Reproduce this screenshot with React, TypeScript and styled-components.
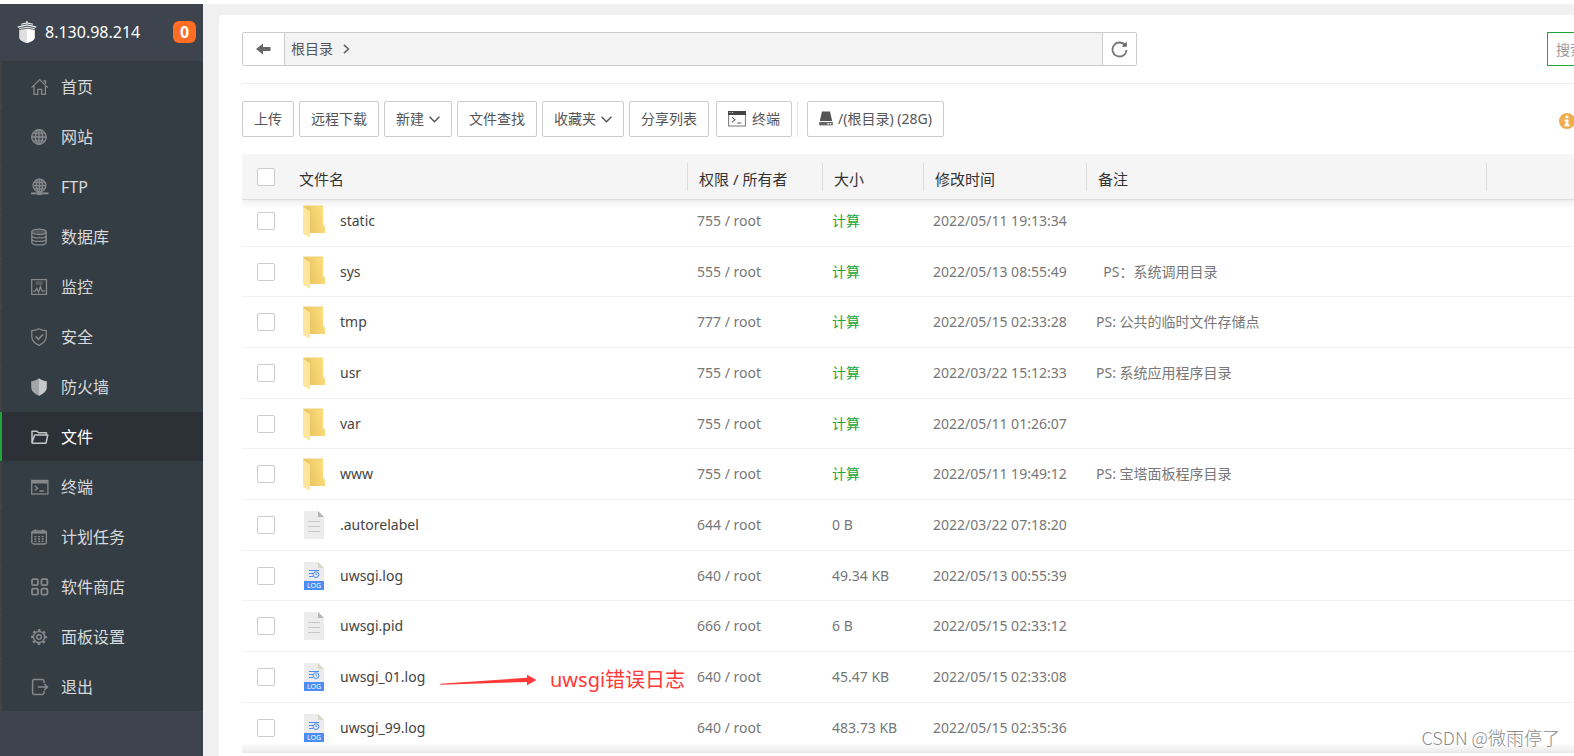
import React from "react";
import styled, { createGlobalStyle } from "styled-components";

const GlobalStyle = createGlobalStyle`
  *, *::before, *::after { box-sizing: border-box; }
  body {
    margin: 0;
    background: #fff;
    color: #555;
    font-family: "Noto Sans", "Noto Sans CJK SC", sans-serif;
    font-size: 14px;
    line-height: 20px;
    overflow-x: hidden;
  }
  a { color: inherit; text-decoration: none; }
  button, input { font: inherit; color: inherit; margin: 0; }
  svg { display: block; flex: none; }
`;

/* ---------- page frame ---------- */

const Page = styled.div`
  position: relative;
  display: flex;
  min-height: 100vh;
  padding-top: 4px;
  overflow: hidden;
`;

const Sidebar = styled.aside`
  flex: none;
  width: 203px;
  background: #3d444e;
`;

const Brand = styled.div`
  display: flex;
  align-items: center;
  height: 57px;
  padding: 0 7px 2px 17px;
  color: #fff;
  font-size: 16px;
`;

const Address = styled.span`
  flex: 1;
  margin-left: 8px;
`;

const Badge = styled.span`
  width: 23px;
  height: 22px;
  border-radius: 6px;
  background: #ff6c23;
  font-weight: 700;
  line-height: 22px;
  text-align: center;
`;

const Menu = styled.ul`
  margin: 0;
  padding: 0;
  list-style: none;
  background: #353d44;
`;

const MenuItem = styled.li`
  padding-top: 1px;
`;

const MenuLink = styled.a<{ $active?: boolean }>`
  display: flex;
  align-items: center;
  gap: 12px;
  height: 49px;
  padding-left: 29px;
  border-left: 2px solid ${(p) => (p.$active ? "#20a53a" : "#444341")};
  background: ${(p) => (p.$active ? "#2c3138" : "transparent")};
  color: ${(p) => (p.$active ? "#fff" : "#d8dadc")};
  font-size: 16px;

  svg { color: ${(p) => (p.$active ? "#c4c5c7" : "#85898c")}; }
`;

const Main = styled.main`
  flex: 1;
  min-width: 0;
  padding: 11px 0 0 16px;
  background: #f0f0f0;
`;

/* The panel is wider than the visible area; its right end scrolls out of view. */
const Panel = styled.section`
  margin-right: -224px;
  padding: 17px 23px 4px;
  border-radius: 4px 0 0 0;
  background: #fff;
`;

/* ---------- path bar ---------- */

const PathRow = styled.div`
  display: flex;
  justify-content: space-between;
  padding-bottom: 17px;
  border-bottom: 1px solid #ececec;
`;

const PathBar = styled.div`
  display: flex;
  flex: 0 1 895px;
  height: 34px;
  border: 1px solid #ccc;
  border-radius: 2px;
  background: #f3f3f3;
`;

const PathButton = styled.button<{ $width: number; $side: "left" | "right" }>`
  display: flex;
  align-items: center;
  justify-content: center;
  width: ${(p) => p.$width}px;
  padding: 0;
  border: 0;
  border-${(p) => p.$side}: 1px solid #ccc;
  background: #fff;
  color: #666;
`;

const Crumbs = styled.nav`
  display: flex;
  flex: 1;
  align-items: center;
  gap: 10px;
  padding-left: 6px;
`;

const Search = styled.input`
  width: 228px;
  height: 34px;
  padding: 0 8px;
  border: 1px solid #20a53a;
  border-radius: 0;
  background: #fff;
  outline: none;

  &::placeholder { color: #999; opacity: 1; }
`;

/* ---------- toolbar ---------- */

const Toolbar = styled.div`
  display: flex;
  align-items: center;
  gap: 5px;
  margin: 17px 0;
`;

const ToolButton = styled.button`
  display: flex;
  align-items: center;
  gap: 5px;
  height: 36px;
  padding: 0 11px;
  border: 1px solid #ccc;
  border-radius: 2px;
  background: #fff;
  white-space: nowrap;
`;

const ToolGroup = styled.div`
  display: flex;
  margin-left: 2px;
  padding-right: 5px;
  border-right: 1px solid #e6e6e6;
`;

const DiskGroup = styled.div`
  margin-left: 4px;
`;

const Hint = styled.div`
  width: 216px;
  margin-left: auto;
  padding-top: 4px;
`;

/* ---------- file table ---------- */

const TableArea = styled.div`
  position: relative;
  overflow: hidden;

  &::after {
    content: "";
    position: absolute;
    inset: auto 0 0 0;
    height: 10px;
    background: linear-gradient(rgba(0, 0, 0, 0), rgba(0, 0, 0, 0.09));
    pointer-events: none;
  }
`;

const FileTable = styled.table`
  width: 100%;
  table-layout: fixed;
  border-collapse: separate;
  border-spacing: 0;
`;

const Col = styled.col<{ $width?: number }>`
  width: ${(p) => (p.$width ? p.$width + "px" : "auto")};
`;

const HeadRow = styled.tr`
  height: 46px;
  background: #f5f5f5;
  box-shadow: 0 2px 8px rgba(0, 0, 0, 0.1);
`;

const HeadCell = styled.th<{ $divided?: boolean }>`
  padding: 4px 0 0 12px;
  border-bottom: 1px solid #ddd;
  background: ${(p) =>
    p.$divided
      ? "linear-gradient(#ddd, #ddd) left 9px / 1px 28px no-repeat"
      : "none"};
  color: #333;
  font-size: 15px;
  font-weight: 400;
  text-align: left;
`;

const FileRow = styled.tr`
  height: 51px;
  &:nth-child(3n + 2) { height: 50px; }
  &:first-child { height: 47px; }
  &:first-child > td { padding-bottom: 4px; }
  &:last-child > td { border-bottom-color: transparent; }
`;

const Cell = styled.td`
  position: relative;
  padding: 0 0 0 10px;
  border-bottom: 1px solid #f1f1f1;
  color: #777;
  white-space: nowrap;
`;

const CheckCell = styled(Cell)`
  padding-left: 15px;
`;

const CheckHead = styled(HeadCell)`
  padding: 0 0 0 15px;
`;

const Check = styled.input`
  display: block;
  appearance: none;
  width: 18px;
  height: 18px;
  border: 1px solid #ccc;
  border-radius: 2px;
  background: #fff;

  &:checked { background: #20a53a; }
`;

const FileLink = styled.a`
  display: flex;
  align-items: center;
  gap: 14px;
  padding-left: 5px;
  color: #444;
`;

const CountLink = styled.a`
  color: #20a53a;
`;

const Note = styled.span`
  white-space: pre;
`;

const Callout = styled.div`
  position: absolute;
  top: 16px;
  left: 153px;
  display: flex;
  align-items: center;
  gap: 13px;
  color: #ff3838;
  font-size: 20px;
  line-height: 24px;
`;

const Watermark = styled.div`
  position: absolute;
  right: 14px;
  bottom: 8px;
  color: #8c8c8c;
  font-family: "Noto Sans CJK SC", sans-serif;
  font-size: 18px;
  font-weight: 300;
  line-height: 24px;
`;

/* ---------- icons ---------- */

const MenuIcon = ({ children }: { children: React.ReactNode }) => (
  <svg width="18" height="18" viewBox="0 0 18 18" fill="none" stroke="currentColor" strokeWidth="1.3" aria-hidden="true">
    {children}
  </svg>
);

const icons: Record<string, React.ReactNode> = {
  home: <path d="M.6 9.6 8.7 1.600l8.100 8M3 8v8.400h3.800v-5h3.800v5h3.800V8M12.400 3h2.200v3" />,
  globe: (
    <>
      <circle cx="8" cy="9" r="7.300" fill="currentColor" fillOpacity=".2" />
      <ellipse cx="8" cy="9" rx="3.600" ry="7.300" />
      <path d="M8 1.700v14.600M.7 9h14.600M2 5.200h12M2 12.800h12" />
    </>
  ),
  ftp: (
    <>
      <circle cx="8.500" cy="7.600" r="6.400" fill="currentColor" fillOpacity=".2" />
      <ellipse cx="8.500" cy="7.600" rx="3" ry="6.400" />
      <path d="M8.500 1.200V14M2.100 7.600h12.800M3 4.400h11M3 10.800h11" />
      <path d="M0 15.400h17.500" strokeWidth="2" />
      <path d="M6.500 15.400h4" strokeWidth="3.400" />
    </>
  ),
  database: (
    <>
      <ellipse cx="8" cy="3.800" rx="7.200" ry="2.700" fill="currentColor" fillOpacity=".35" />
      <path d="M.8 3.800v10.400c0 3.600 14.400 3.600 14.400 0V3.800M.8 7.200c0 3.600 14.400 3.600 14.400 0M.8 10.700c0 3.600 14.400 3.600 14.400 0" />
    </>
  ),
  monitor: (
    <>
      <rect x=".7" y="1.600" width="14.800" height="14.800" />
      <path d="M4.600 4.200h7M4.600 6h7" strokeOpacity=".6" />
      <path d="M2 13.200h2.200l1.600-3 1.800 4 1.800-5.400 1.600 4.400h3.200" />
    </>
  ),
  shieldCheck: (
    <>
      <path d="M8 .8c2.200 1.300 4.600 1.800 7.200 1.800v6c0 4-2.800 6.900-7.200 8.800C3.600 15.500.8 12.600.8 8.600v-6C3.400 2.600 5.800 2.100 8 .8z" />
      <path d="m4.600 8.400 2.800 2.900 4.800-5.100" strokeWidth="1.600" />
    </>
  ),
  firewall: (
    <>
      <path d="M8 .2v17.600C3 15.400.2 13 .2 9V3.200C3.200 3 5.600 2 8 .2z" fill="#a3a5a6" stroke="none" />
      <path d="M8 .2v17.600c5-2.400 7.800-4.800 7.800-8.800V3.200C12.800 3 10.400 2 8 .2z" fill="#c6c8c9" stroke="none" />
    </>
  ),
  folder: (
    <path d="M1 14.400V3.200h5l1.400 1.600h8V7M1 14.800 3.600 7h13.200l-1.800 8.200H1.200z" strokeWidth="1.500" strokeLinejoin="round" />
  ),
  terminal: (
    <>
      <rect x=".7" y="2.400" width="16.200" height="13.600" />
      <path d="M.7 4h16.200" strokeWidth="3" />
      <path d="m3.800 7.800 2.800 2.400-2.800 2.400M8.400 13h4.400" />
    </>
  ),
  calendar: (
    <>
      <rect x=".8" y="3" width="14.600" height="13" rx="2" />
      <path d="M1 4.600h14.200" strokeWidth="2" />
      <path d="M4.400 1.200v3M11.800 1.200v3" />
      <path d="M3.400 8.600h9.600M3.400 11h9.600M3.400 13.400h9.600" strokeDasharray="2 1.600" />
    </>
  ),
  apps: (
    <g strokeWidth="1.800">
      <rect x="1" y="1.200" width="6" height="6" rx="1.400" />
      <rect x="10.400" y="1.200" width="6" height="6" rx="1.400" />
      <rect x="1" y="10.600" width="6" height="6" rx="1.400" />
      <rect x="10.400" y="10.600" width="6" height="6" rx="1.400" />
    </g>
  ),
  gear: (
    <>
      <circle cx="8" cy="9" r="5.600" strokeWidth="1.500" />
      <circle cx="8" cy="9" r="7" strokeWidth="2" strokeDasharray="2.600 2.900" strokeDashoffset="1.300" />
      <circle cx="8" cy="9" r="2.300" strokeWidth="1.500" />
    </>
  ),
  exit: (
    <path d="M13 5V3.200c0-1-.6-1.600-1.600-1.600H3.200c-1 0-1.600.6-1.600 1.600v11.600c0 1 .6 1.600 1.600 1.600h8.200c1 0 1.600-.6 1.600-1.600V13M6.800 9h9.400M13.400 6l3 3-3 3" strokeWidth="1.500" />
  ),
};

const Logo = () => (
  <svg width="20" height="22" viewBox="0 0 20 22" aria-hidden="true">
    <path d="M9.400 0h1.200v1.400l5.400 1.400-.3 1L10 2.600 4.300 3.800l-.3-1 5.400-1.400z" fill="#fff" />
    <path d="M10 3.200l9.400 2.400-.3 1.100L10 4.600.9 6.700.6 5.600z" fill="#fff" />
    <path d="M10 5.400l8 1.900-.2 1L10 6.700 2.200 8.300l-.2-1z" fill="#e4e4e4" />
    <path d="M10 7.400l7.800 1.600v7.200c0 2.800-3.400 4.800-7.800 5.800z" fill="#fff" />
    <path d="M10 7.400L2.200 9v7.200c0 2.800 3.400 4.800 7.800 5.800z" fill="#e0e0e0" />
  </svg>
);

const Chevron = () => (
  <svg width="11" height="7" viewBox="0 0 11 7" fill="none" stroke="#555" strokeWidth="1.400" aria-hidden="true">
    <path d="M.6.800 5.500 5.800 10.400.800" />
  </svg>
);

const TerminalIcon = () => (
  <svg width="19" height="16" viewBox="0 0 19 16" fill="none" aria-hidden="true">
    <rect x=".6" y=".6" width="16.800" height="14.400" stroke="#777" />
    <path d="M0 2h18" stroke="#444" strokeWidth="4" />
    <path d="M1.400 1.600h1.200M4 1.600h1.200" stroke="#ddd" />
    <path d="m4 6.200 3 2.600-3 2.600M9 12h4.400" stroke="#666" strokeWidth="1.100" />
  </svg>
);

const DiskIcon = () => (
  <svg width="14" height="16" viewBox="0 0 14 16" aria-hidden="true">
    <path d="M3 .6h8l2.200 9.400H.8z" fill="#555" />
    <path d="M.2 11h13.600v3.400H.2z" fill="#666" />
    <path d="M8.400 12h1.400v1.400H8.400zM10.800 12h1.400v1.400h-1.400z" fill="#fff" />
  </svg>
);

const FolderIcon = () => (
  <svg width="24" height="34" viewBox="0 -1 24 34" aria-hidden="true">
    <defs>
      <linearGradient id="folderBack" x1="0" y1="0.600" x2="1" y2="0.300">
        <stop offset="0.250" stopColor="#ecc763" />
        <stop offset="1" stopColor="#fddf7e" />
      </linearGradient>
    </defs>
    <path d="M1 1h20v18l2 3v6H8z" fill="url(#folderBack)" />
    <path d="M1 1.400 8 6.600V33L1 28.400z" fill="#ffe69c" />
    <path d="M1 1h20" stroke="#f0d27a" strokeWidth="1" />
  </svg>
);

const DocIcon = () => (
  <svg width="24" height="30" viewBox="0 0 24 30" aria-hidden="true">
    <path d="M2 1h14l6 6v22H2z" fill="#ececec" />
    <path d="M16 1l6 6h-6z" fill="#b5b5b5" />
    <path d="M6 11.500h12M6 16.500h12M6 21.500h12" stroke="#c6c6c6" />
  </svg>
);

const LogIcon = () => (
  <svg width="24" height="30" viewBox="0 0 24 30" aria-hidden="true">
    <path d="M2 1h14l6 6v13H2z" fill="#ececec" />
    <path d="M16 1l6 6h-6z" fill="#d8d8c8" />
    <path d="M7 9.500h10M7 12.500h4M7 15.500h4" stroke="#4a8df5" strokeWidth="1.200" />
    <circle cx="14" cy="13.600" r="2.900" fill="none" stroke="#4a8df5" />
    <path d="M14 12v1.800h1.400" fill="none" stroke="#4a8df5" strokeWidth=".8" />
    <path d="M2 20h20v9H2z" fill="#4a8df5" />
    <text x="12" y="27" textAnchor="middle" fontSize="7" fill="#fff">LOG</text>
  </svg>
);

const fileIcons = { folder: <FolderIcon />, doc: <DocIcon />, log: <LogIcon /> };

/* ---------- data ---------- */

const menu = [
  ["home", "首页"],
  ["globe", "网站"],
  ["ftp", "FTP"],
  ["database", "数据库"],
  ["monitor", "监控"],
  ["shieldCheck", "安全"],
  ["firewall", "防火墙"],
  ["folder", "文件"],
  ["terminal", "终端"],
  ["calendar", "计划任务"],
  ["apps", "软件商店"],
  ["gear", "面板设置"],
  ["exit", "退出"],
];

type FileItem = {
  name: string;
  kind: keyof typeof fileIcons;
  owner: string;
  size?: string;
  time: string;
  note?: string;
  callout?: string;
};

const files: FileItem[] = [
  { name: "static", kind: "folder", owner: "755 / root", time: "2022/05/11 19:13:34" },
  { name: "sys", kind: "folder", owner: "555 / root", time: "2022/05/13 08:55:49", note: "\u00a0\u00a0PS：系统调用目录" },
  { name: "tmp", kind: "folder", owner: "777 / root", time: "2022/05/15 02:33:28", note: "PS: 公共的临时文件存储点" },
  { name: "usr", kind: "folder", owner: "755 / root", time: "2022/03/22 15:12:33", note: "PS: 系统应用程序目录" },
  { name: "var", kind: "folder", owner: "755 / root", time: "2022/05/11 01:26:07" },
  { name: "www", kind: "folder", owner: "755 / root", time: "2022/05/11 19:49:12", note: "PS: 宝塔面板程序目录" },
  { name: ".autorelabel", kind: "doc", owner: "644 / root", size: "0 B", time: "2022/03/22 07:18:20" },
  { name: "uwsgi.log", kind: "log", owner: "640 / root", size: "49.34 KB", time: "2022/05/13 00:55:39" },
  { name: "uwsgi.pid", kind: "doc", owner: "666 / root", size: "6 B", time: "2022/05/15 02:33:12" },
  { name: "uwsgi_01.log", kind: "log", owner: "640 / root", size: "45.47 KB", time: "2022/05/15 02:33:08", callout: "uwsgi错误日志" },
  { name: "uwsgi_99.log", kind: "log", owner: "640 / root", size: "483.73 KB", time: "2022/05/15 02:35:36" },
];

export default function App() {
  return (
    <>
      <GlobalStyle />
      <Page>
        <Sidebar>
          <Brand>
            <Logo />
            <Address>8.130.98.214</Address>
            <Badge>0</Badge>
          </Brand>
          <Menu>
            {menu.map(([icon, label]) => (
              <MenuItem key={label}>
                <MenuLink href="#" $active={label === "文件"}>
                  <MenuIcon>{icons[icon]}</MenuIcon>
                  {label}
                </MenuLink>
              </MenuItem>
            ))}
          </Menu>
        </Sidebar>

        <Main>
          <Panel>
            <PathRow>
              <PathBar>
                <PathButton $width={42} $side="right" aria-label="返回">
                  <svg width="15" height="12" viewBox="0 0 15 12" aria-hidden="true">
                    <path d="M0 6 7 .4v3.600h7.500v4H7v3.600z" fill="#666" />
                  </svg>
                </PathButton>
                <Crumbs>
                  <a href="#">根目录</a>
                  <svg width="7" height="10" viewBox="0 0 7 10" fill="none" stroke="#666" strokeWidth="1.600" aria-hidden="true">
                    <path d="m1 .8 4.400 4.200L1 9.200" />
                  </svg>
                </Crumbs>
                <PathButton $width={34} $side="left" aria-label="刷新">
                  <svg width="17" height="17" viewBox="0 0 17 17" fill="none" stroke="#777" strokeWidth="1.800" aria-hidden="true">
                    <path d="M14.200 4.400A7 7 0 1 0 15.500 9" />
                    <path d="M15.800.6v5.200h-5.200z" fill="#666" stroke="none" />
                  </svg>
                </PathButton>
              </PathBar>
              <Search aria-label="搜索" placeholder="搜索文件/目录" />
            </PathRow>

            <Toolbar>
              <ToolButton>上传</ToolButton>
              <ToolButton>远程下载</ToolButton>
              <ToolButton>新建<Chevron /></ToolButton>
              <ToolButton>文件查找</ToolButton>
              <ToolButton>收藏夹<Chevron /></ToolButton>
              <ToolButton>分享列表</ToolButton>
              <ToolGroup>
                <ToolButton><TerminalIcon />终端</ToolButton>
              </ToolGroup>
              <DiskGroup>
                <ToolButton><DiskIcon />/(根目录) (28G)</ToolButton>
              </DiskGroup>
              <Hint>
                <svg width="16" height="16" viewBox="0 0 16 16" aria-hidden="true">
                  <circle cx="8" cy="8" r="8" fill="#f0ad4e" />
                  <path d="M6.600 2.800h2.800v2.400H6.600zM5.400 6.400h4v5h1.200v1.800H5.400v-1.800h1.200V8.200H5.400z" fill="#fff" />
                </svg>
              </Hint>
            </Toolbar>

            <TableArea>
              <FileTable>
                <colgroup>
                  <Col $width={45} />
                  <Col $width={400} />
                  <Col $width={135} />
                  <Col $width={101} />
                  <Col $width={163} />
                  <Col $width={400} />
                  <Col />
                </colgroup>
                <thead>
                  <HeadRow>
                    <CheckHead><Check type="checkbox" aria-label="全选" /></CheckHead>
                    <HeadCell>文件名</HeadCell>
                    <HeadCell $divided>权限 / 所有者</HeadCell>
                    <HeadCell $divided>大小</HeadCell>
                    <HeadCell $divided>修改时间</HeadCell>
                    <HeadCell $divided>备注</HeadCell>
                    <HeadCell $divided />
                  </HeadRow>
                </thead>
                <tbody>
                  {files.map((f) => (
                    <FileRow key={f.name}>
                      <CheckCell><Check type="checkbox" aria-label={f.name} /></CheckCell>
                      <Cell>
                        <FileLink href="#">{fileIcons[f.kind]}{f.name}</FileLink>
                        {f.callout && (
                          <Callout>
                            <svg width="97" height="12" viewBox="0 0 97 12" fill="#ff3838" aria-hidden="true">
                              <path d="M.5 9.800 87 3.800V.8L96.500 6 87 11.200V8L.5 10.800z" />
                            </svg>
                            {f.callout}
                          </Callout>
                        )}
                      </Cell>
                      <Cell>{f.owner}</Cell>
                      <Cell>{f.size ?? <CountLink href="#">计算</CountLink>}</Cell>
                      <Cell>{f.time}</Cell>
                      <Cell><Note>{f.note}</Note></Cell>
                      <Cell />
                    </FileRow>
                  ))}
                </tbody>
              </FileTable>
            </TableArea>
          </Panel>
        </Main>
        <Watermark>CSDN @微雨停了</Watermark>
      </Page>
    </>
  );
}
